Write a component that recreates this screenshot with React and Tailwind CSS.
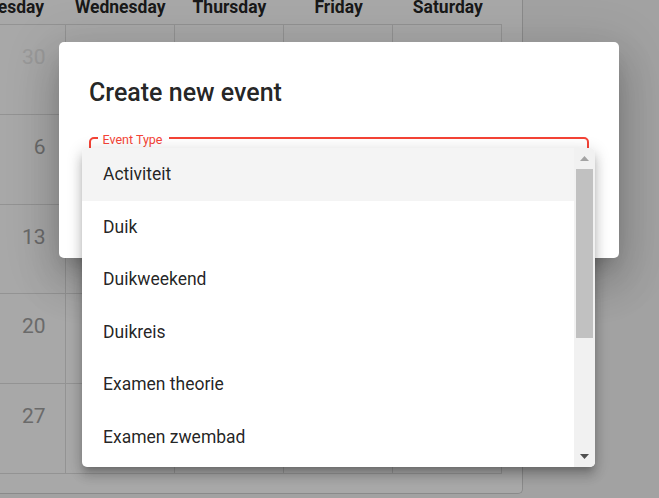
import React from 'react';

const days = ['Sunday', 'Monday', 'Tuesday', 'Wednesday', 'Thursday', 'Friday', 'Saturday'];

// April 2021 month view
const weeks = [
  [[28, 0], [29, 0], [30, 0], [31, 0], [1, 1], [2, 1], [3, 1]],
  [[4, 1], [5, 1], [6, 1], [7, 1], [8, 1], [9, 1], [10, 1]],
  [[11, 1], [12, 1], [13, 1], [14, 1], [15, 1], [16, 1], [17, 1]],
  [[18, 1], [19, 1], [20, 1], [21, 1], [22, 1], [23, 1], [24, 1]],
  [[25, 1], [26, 1], [27, 1], [28, 1], [29, 1], [30, 1], [1, 0]],
];

const eventTypes = [
  'Activiteit',
  'Duik',
  'Duikweekend',
  'Duikreis',
  'Examen theorie',
  'Examen zwembad',
  'Feest',
];

const Calendar = () => (
  <div className="h-[494px] w-[523px] overflow-hidden rounded-br-[5px] border-b border-r border-[#d2d2d2] bg-white">
    <div className="-ml-[262px] w-[764.4px]">
      <div className="grid h-[24px] grid-cols-7">
        {days.map((d) => (
          <div key={d} className="text-center text-[17.5px] font-bold leading-[14px] text-[rgba(0,0,0,0.87)]">
            {d}
          </div>
        ))}
      </div>
      <div className="grid grid-cols-7 border-t border-[#e0e0e0]">
        {weeks.flat().map(([n, current], i) => (
          <div
            key={i}
            className="h-[89.8px] border-b border-r border-[#e0e0e0] pr-[19px] pt-[20px] text-right"
          >
            <span className={`text-[21px] leading-[24px] ${current ? 'text-[#a2a2a2]' : 'text-[#e8e8e8]'}`}>
              {n}
            </span>
          </div>
        ))}
      </div>
    </div>
  </div>
);

const Scrollbar = () => (
  <div className="flex w-[21px] flex-col bg-[#f1f1f1]">
    <div className="flex h-[21px] items-center justify-center">
      <svg width="9" height="5" viewBox="0 0 9 5">
        <polygon points="0,5 4.5,0 9,5" fill="#a3a3a3" />
      </svg>
    </div>
    <div className="mx-[2px] h-[169px] bg-[#c1c1c1]" />
    <div className="flex-1" />
    <div className="flex h-[21px] items-center justify-center">
      <svg width="9" height="5" viewBox="0 0 9 5">
        <polygon points="0,0 9,0 4.5,5" fill="#505050" />
      </svg>
    </div>
  </div>
);

export default function App() {
  return (
    <div className="relative h-[498px] w-[659px] overflow-hidden bg-[#f6f6f6] font-['Roboto',sans-serif]">
      <Calendar />

      <div className="absolute inset-0 bg-black/[0.34]" />

      <div className="absolute left-[59px] top-[42px] h-[216px] w-[560px] rounded-[5px] bg-white px-[30px] pt-[35px] shadow-[0_12px_17px_-8px_rgba(0,0,0,0.2),0_26px_42px_3px_rgba(0,0,0,0.14),0_10px_50px_9px_rgba(0,0,0,0.12)]">
        <h2 className="text-[25px] font-medium leading-[32px] text-[rgba(0,0,0,0.87)]">Create new event</h2>
        <div className="relative mt-[27.5px] h-[62px] rounded-[5px] border-2 border-[#f44336]">
          <span className="absolute left-[6.5px] top-[-7px] bg-white pl-[5px] pr-[7px] text-[12.5px] leading-[16px] text-[#f44336]">
            Event Type
          </span>
        </div>
      </div>

      <div className="absolute left-[82px] top-[148px] flex h-[319px] w-[513px] overflow-hidden rounded-[5px] bg-white shadow-[0_5px_6px_-3px_rgba(0,0,0,0.2),0_9px_11px_1px_rgba(0,0,0,0.14),0_3px_15px_2px_rgba(0,0,0,0.12)]">
        <ul className="flex-1">
          {eventTypes.map((t, i) => (
            <li
              key={t}
              className={`flex h-[52.5px] items-center pl-[21px] text-[17.5px] text-[rgba(0,0,0,0.87)] ${i === 0 ? 'bg-[#f4f4f4]' : ''}`}
            >
              {t}
            </li>
          ))}
        </ul>
        <Scrollbar />
      </div>
    </div>
  );
}
